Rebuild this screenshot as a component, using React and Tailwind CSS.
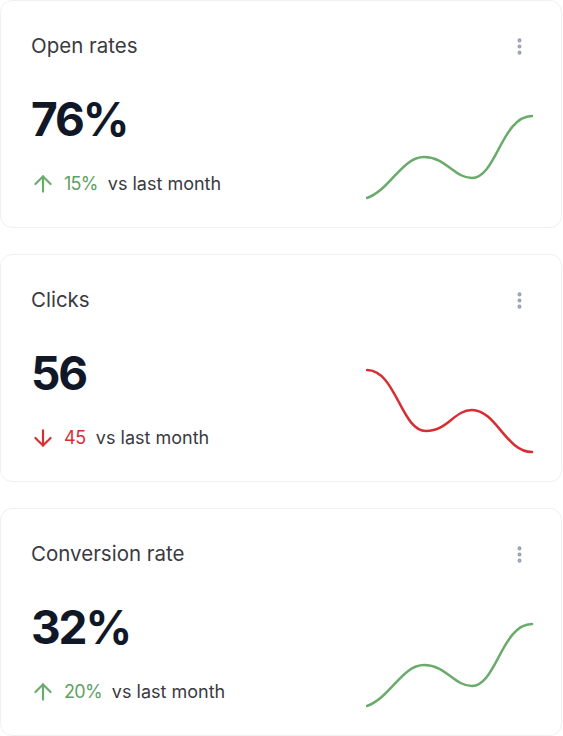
import { ArrowUp, ArrowDown, EllipsisVertical } from "lucide-react";

const metrics = [
  {
    title: "Open rates",
    value: "76%",
    change: "15%",
    up: true,
    path: "M1 84 C24 76 36 43 58 43 C80 43 88 64 106 64 C130 64 136 2 166 2",
  },
  {
    title: "Clicks",
    value: "56",
    change: "45",
    up: false,
    path: "M1 2 C30 2 35 63 60 63 C82 63 88 42 106 42 C130 42 140 84 166 84",
  },
  {
    title: "Conversion rate",
    value: "32%",
    change: "20%",
    up: true,
    path: "M1 84 C24 76 36 43 58 43 C80 43 88 64 106 64 C130 64 136 2 166 2",
  },
];

function MetricCard({ title, value, change, up, path }) {
  const color = up ? "#6aab6c" : "#d92d34";
  return (
    <div className="rounded-xl border border-[#f0f0f2] bg-white px-[30px] pt-[31px] pb-[29px] h-[228px]">
      <div className="flex items-center justify-between">
        <h3 className="text-[20.5px] leading-7 text-[#3a3a3f]">{title}</h3>
        <button type="button" className="mr-[1px] text-[#98a2b3]">
          <EllipsisVertical size={21} strokeWidth={2.6} />
        </button>
      </div>
      <div className="flex items-end justify-between">
        <div>
          <div className="mt-9 text-[46px] leading-none font-bold tracking-[-0.045em] text-[#101828]">
            {value}
          </div>
          <div className="mt-[29px] flex items-center gap-2 text-lg leading-6">
            {up ? (
              <ArrowUp size={26} strokeWidth={2} color={color} className="-ml-[1px]" />
            ) : (
              <ArrowDown size={26} strokeWidth={2} color={color} className="-ml-[1px]" />
            )}
            <span className={up ? "text-[#5f9f63] tracking-[-0.04em]" : "text-[#d92d34] tracking-[-0.02em]"}>
              {change}
            </span>
            <span className="ml-[2px] text-[#3a3a3f]">vs last month</span>
          </div>
        </div>
        <svg width="168" height="88" viewBox="0 -1 168 88" className="-mr-[3px] -mb-[4px]">
          <path d={path} fill="none" stroke={color} strokeWidth="2.5" strokeLinecap="round" />
        </svg>
      </div>
    </div>
  );
}

export default function App() {
  return (
    <div className="min-h-screen bg-white font-['Inter',sans-serif]">
      <div className="flex w-[562px] flex-col gap-[26px]">
        {metrics.map((m) => (
          <MetricCard key={m.title} {...m} />
        ))}
      </div>
    </div>
  );
}
